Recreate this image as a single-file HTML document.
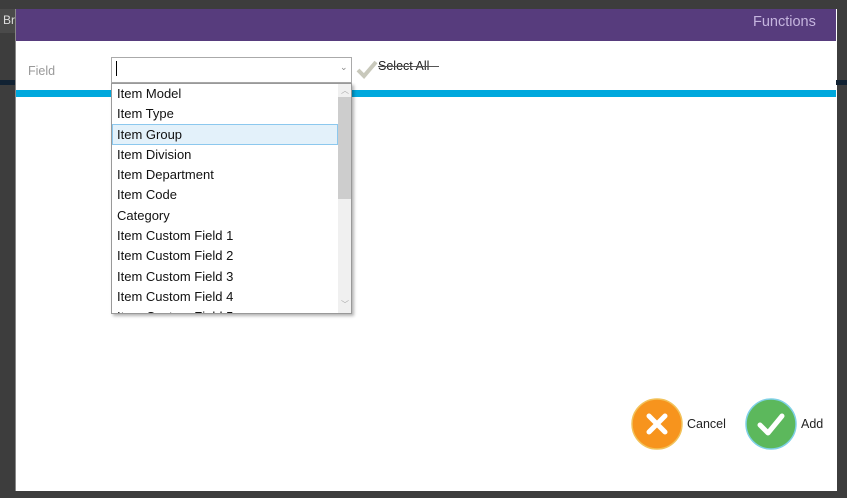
<!DOCTYPE html><html><head><style>
body{margin:0;width:847px;height:498px;background:#3d3d3d;position:relative;overflow:hidden;font-family:"Liberation Sans",sans-serif}
.a{position:absolute}
</style></head><body>
<div class="a" style="left:0;top:9px;width:16px;height:24px;background:#4a4a4a;color:#ddd;font-size:12px;padding:4px 0 0 3px;box-sizing:border-box">Br</div>
<div class="a" style="left:0;top:80px;width:16px;height:5px;background:#123"></div>
<div class="a" style="left:15px;top:9px;width:821px;height:482px;background:#fff;border-left:1px solid #888"></div>
<div class="a" style="left:16px;top:9px;width:820px;height:32px;background:#573c7d"></div>
<div class="a" style="left:753px;top:14px;color:#c5b5de;font-size:14.5px">Functions</div>
<div class="a" style="left:16px;top:90px;width:820px;height:7px;background:#00a8dd"></div>
<div class="a" style="left:836px;top:80px;width:11px;height:5px;background:#123"></div>
<div class="a" style="left:28px;top:64px;color:#999;font-size:12.5px">Field</div>
<div class="a" style="left:111px;top:57px;width:239px;height:24px;border:1px solid #aaa;background:#fff"></div>
<div class="a" style="left:116px;top:61px;width:1px;height:15px;background:#000"></div>
<div class="a" style="left:340px;top:62px;color:#888;font-size:9px">⌄</div>
<svg class="a" style="left:356px;top:59px" width="22" height="20"><path d="M2 11 L8 17 L20 3" stroke="#c8c8bb" stroke-width="4" fill="none"/></svg>
<div class="a" style="left:378px;top:59px;font-size:12.5px;color:#222">Select All</div>
<div class="a" style="left:378px;top:66px;width:61px;height:1px;background:#555"></div>
<div class="a" style="left:111px;top:83px;width:239px;height:229px;border:1px solid #999;background:#fff;box-shadow:2px 2px 3px rgba(0,0,0,.3);overflow:hidden">
<div class="a" style="left:0;top:40px;width:224px;height:19px;background:#e3f1fa;border:1px solid #8cc8ee"></div>
<div class="a" style="left:226px;top:0;width:13px;height:229px;background:#f0f0f0"></div>
<div class="a" style="left:226px;top:13px;width:13px;height:102px;background:#cdcdcd"></div>
<div class="a" style="left:229px;top:1px;color:#aaa;font-size:8px">︿</div>
<div class="a" style="left:229px;top:215px;color:#aaa;font-size:8px">﹀</div>
<div class="a" style="left:5px;top:0px;font-size:13px;line-height:20.3px;color:#111">Item Model<br>Item Type<br>Item Group<br>Item Division<br>Item Department<br>Item Code<br>Category<br>Item Custom Field 1<br>Item Custom Field 2<br>Item Custom Field 3<br>Item Custom Field 4<br>Item Custom Field 5</div>
</div>
<svg class="a" style="left:631px;top:398px" width="52" height="52"><circle cx="26" cy="26" r="25" fill="#f7941d" stroke="#f2c25a" stroke-width="1.5"/><path d="M18 18L34 34M34 18L18 34" stroke="#fff" stroke-width="5" stroke-linecap="round"/></svg>
<div class="a" style="left:687px;top:417px;font-size:12.5px;color:#222">Cancel</div>
<svg class="a" style="left:745px;top:398px" width="52" height="52"><circle cx="26" cy="26" r="25" fill="#5cb85c" stroke="#7fd0e6" stroke-width="1.5"/><path d="M15 27L23 35L37 18" stroke="#fff" stroke-width="5" fill="none" stroke-linecap="round" stroke-linejoin="round"/></svg>
<div class="a" style="left:801px;top:417px;font-size:12.5px;color:#222">Add</div>
</body></html>
